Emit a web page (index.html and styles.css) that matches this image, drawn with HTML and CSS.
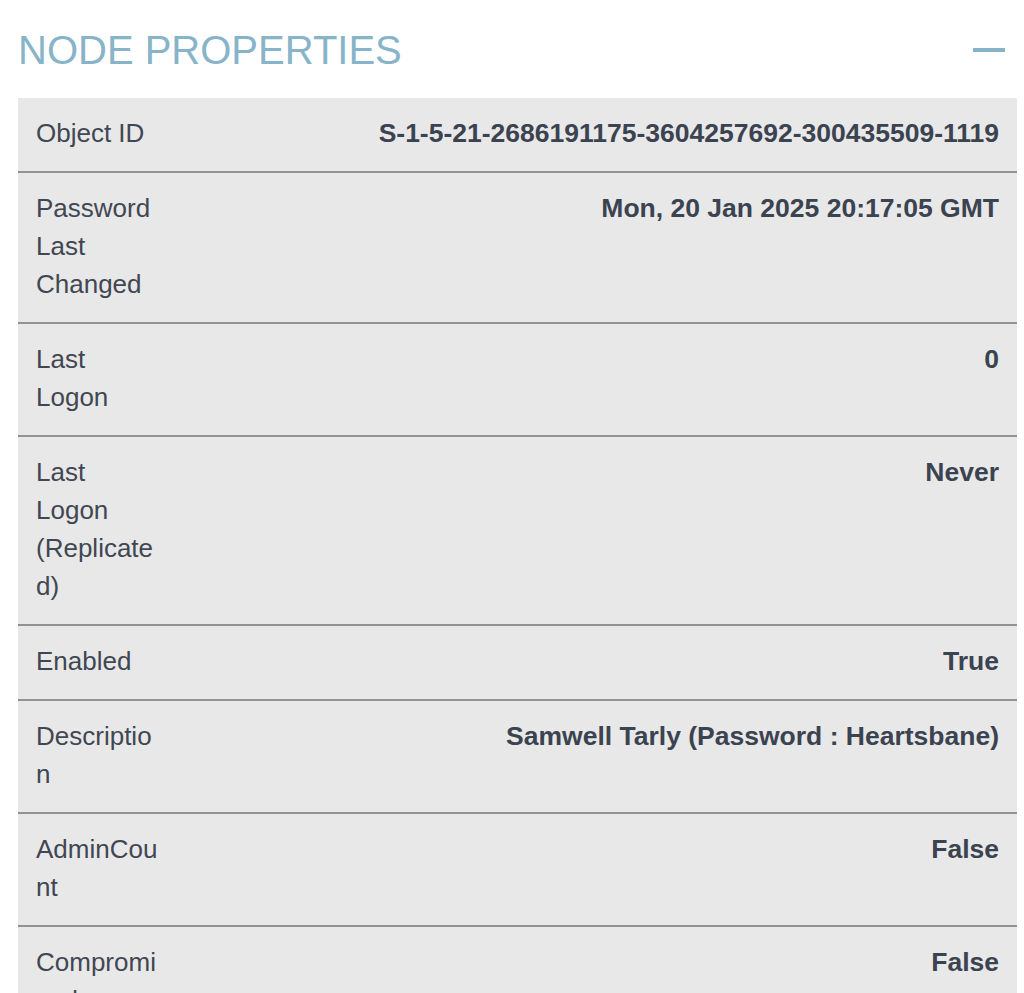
FILE: index.html
```html
<!DOCTYPE html>
<html lang="en">
<head>
<meta charset="utf-8">
<title>Node Properties</title>
<link rel="stylesheet" href="styles.css">
</head>
<body>
<div class="panel">
  <div class="panel-head">
    <h2 class="panel-title">NODE PROPERTIES</h2>
    <span class="collapse" aria-label="collapse"></span>
  </div>
  <div class="props">
    <div class="row"><div class="label">Object ID</div><div class="value">S-1-5-21-2686191175-3604257692-300435509-1119</div></div>
    <div class="row"><div class="label">Password Last Changed</div><div class="value">Mon, 20 Jan 2025 20:17:05 GMT</div></div>
    <div class="row"><div class="label">Last Logon</div><div class="value">0</div></div>
    <div class="row"><div class="label">Last Logon (Replicated)</div><div class="value">Never</div></div>
    <div class="row"><div class="label">Enabled</div><div class="value">True</div></div>
    <div class="row"><div class="label">Description</div><div class="value">Samwell Tarly (Password : Heartsbane)</div></div>
    <div class="row"><div class="label">AdminCount</div><div class="value">False</div></div>
    <div class="row"><div class="label">Compromised</div><div class="value">False</div></div>
  </div>
</div>
</body>
</html>
```
FILE: styles.css
```css
html, body {
  margin: 0;
  padding: 0;
  overflow: hidden;
  background: #ffffff;
}

.panel {
  padding: 27px 7px 0 18px;
  font-family: "Liberation Sans", Arial, sans-serif;
}

.panel-head {
  display: flex;
  align-items: center;
  justify-content: space-between;
  margin-bottom: 25px;
}

.panel-title {
  margin: 0;
  font-size: 40px;
  line-height: 46px;
  font-weight: normal;
  color: #87b4c9;
}

.collapse {
  display: block;
  width: 32px;
  height: 4px;
  margin-right: 12px;
  background: #86b3c7;
}

.props {
  background: #e8e8e8;
}

.row {
  display: flex;
  align-items: flex-start;
  padding: 16px 18px 19px 18px;
  border-bottom: 2px solid #929292;
  font-size: 26px;
  line-height: 38px;
}

.label {
  flex: 0 0 124px;
  width: 124px;
  overflow-wrap: anywhere;
  color: #414752;
}

.value {
  flex: 1 1 auto;
  text-align: right;
  font-weight: bold;
  font-size: 26.5px;
  color: #3b4350;
}
```
